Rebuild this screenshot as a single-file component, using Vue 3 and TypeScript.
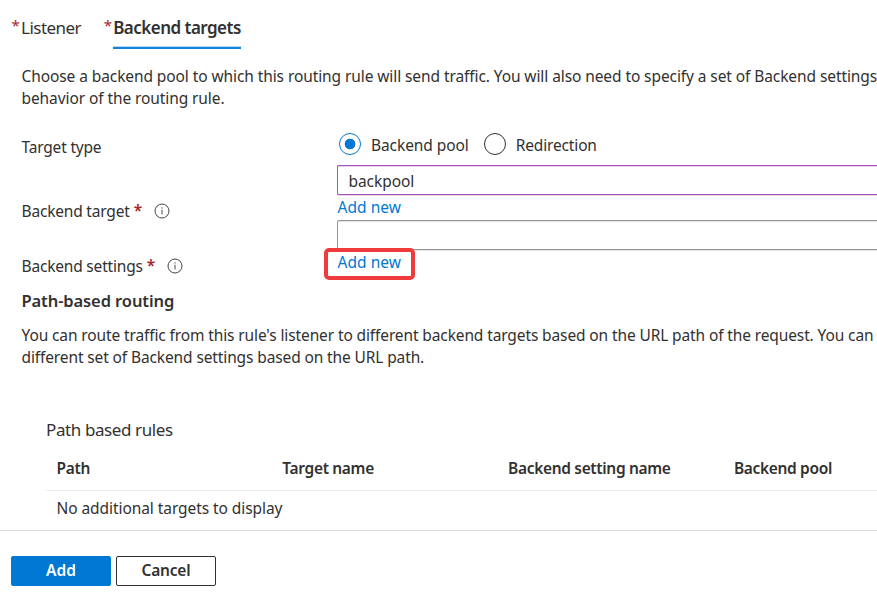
<script setup lang="ts">
import { ref } from 'vue'

interface Option {
  id: string
  label: string
}

const options: Option[] = [
  { id: 'pool', label: 'Backend pool' },
  { id: 'redirect', label: 'Redirection' },
]
const selected = ref('pool')
const backendTarget = ref('backpool')
const backendSettings = ref('')
const columns: string[] = ['Path', 'Target name', 'Backend setting name', 'Backend pool']
</script>

<template>
  <div class="panel">
    <nav class="tabs">
      <a class="tab"><i class="star">*</i><span class="tab-text">Listener</span></a>
      <a class="tab active"><i class="star">*</i><span class="tab-text">Backend targets</span></a>
    </nav>
    <p class="intro">Choose a backend pool to which this routing rule will send traffic. You will also need to specify a set of Backend settings<br>behavior of the routing rule.</p>
    <div class="form">
      <div class="row type-row">
        <div class="label">Target type</div>
        <div class="radios">
          <label v-for="o in options" :key="o.id" class="radio" @click="selected = o.id">
            <span class="circle" :class="{ on: selected === o.id }"></span>
            <span class="radio-text">{{ o.label }}</span>
          </label>
        </div>
      </div>
      <div class="row">
        <div class="label">
          <span>Backend target</span><b class="req">*</b>
          <svg class="info" viewBox="0 0 16 16"><circle cx="8" cy="8" r="7" /><path d="M8 6.8v4.6M8 4.3v1.3" /></svg>
        </div>
        <div class="control">
          <div class="field focus">{{ backendTarget }}</div>
          <a class="link">Add new</a>
        </div>
      </div>
      <div class="row">
        <div class="label">
          <span>Backend settings</span><b class="req">*</b>
          <svg class="info" viewBox="0 0 16 16"><circle cx="8" cy="8" r="7" /><path d="M8 6.8v4.6M8 4.3v1.3" /></svg>
        </div>
        <div class="control">
          <div class="field">{{ backendSettings }}</div>
          <a class="link marked">Add new</a>
        </div>
      </div>
    </div>
    <h3 class="heading">Path-based routing</h3>
    <p class="about">You can route traffic from this rule's listener to different backend targets based on the URL path of the request. You can<br>different set of Backend settings based on the URL path.</p>
    <section class="rules">
      <h4 class="rules-title">Path based rules</h4>
      <div class="head">
        <div v-for="c in columns" :key="c">{{ c }}</div>
      </div>
      <div class="empty">No additional targets to display</div>
    </section>
    <footer class="footer">
      <button class="btn primary">Add</button>
      <button class="btn">Cancel</button>
    </footer>
  </div>
</template>

<style>
body {
  background: #fff;
}
</style>

<style scoped>
.panel {
  width: 100%;
  height: 602px;
  box-sizing: border-box;
  overflow: hidden;
  display: flex;
  flex-direction: column;
  color: #323130;
  background: #fff;
  font-family: 'Noto Sans', 'Open Sans', sans-serif;
  font-size: 15.5px;
  line-height: 22px;
  white-space: nowrap;
}
.tabs {
  display: flex;
  gap: 22.5px;
  padding: 16px 0 0 11.5px;
  height: 33px;
}
.tab {
  display: flex;
  font-size: 17px;
  line-height: 24px;
  letter-spacing: -0.52px;
}
.tab-text {
  height: 31px;
}
.star {
  width: 9.5px;
  font-style: normal;
  font-size: 15px;
  line-height: 18px;
  color: #a4262c;
}
.active .tab-text {
  font-weight: 600;
  border-bottom: 2px solid #1481da;
  box-shadow: inset 0 -1px #b8dbf5;
}
.intro {
  margin: 16px 0 0 21.5px;
  letter-spacing: -0.09px;
}
.form {
  margin: 24px 0 0 21px;
}
.row {
  display: grid;
  grid-template-columns: 316px 1fr;
  height: 55px;
}
.type-row {
  height: 32px;
}
.label {
  display: flex;
  padding: 37px 0 0 0.5px;
  line-height: 18px;
  letter-spacing: -0.19px;
}
.type-row .label {
  padding-top: 3px;
  line-height: 22px;
}
.req {
  margin-left: 4px;
  font-weight: 600;
  line-height: 16px;
  color: #a4262c;
}
.info {
  width: 16px;
  height: 16px;
  margin: 1px 0 0 11.6px;
  fill: none;
  stroke: #444;
  stroke-width: 1;
}
.radios {
  display: flex;
  gap: 15px;
  padding-left: 2px;
  letter-spacing: -0.08px;
}
.radio {
  display: flex;
  gap: 10px;
}
.radio + .radio {
  letter-spacing: -0.15px;
}
.circle {
  width: 22px;
  height: 22px;
  box-sizing: border-box;
  border: 1px solid #323130;
  border-radius: 50%;
}
.circle.on {
  border-color: #0078d4;
  background: radial-gradient(circle, #0078d4 5px, transparent 5.7px);
}
.radio-text {
  padding-top: 1px;
}
.field {
  height: 30px;
  box-sizing: border-box;
  border: 1px solid #979593;
  border-right: 0;
  border-radius: 2px 0 0 2px;
  padding: 4px 10.5px;
  letter-spacing: -0.06px;
  box-shadow: inset 0 1px #e4e4e3, 0 1px #e4e4e3;
}
.field.focus {
  border-color: #a352bb;
  box-shadow: inset 0 1px #e8d2ee, 0 1px #e8d2ee;
}
.link {
  display: block;
  margin-top: 1px;
  padding-left: 0.5px;
  color: #0078d4;
  letter-spacing: 0.04px;
}
.marked {
  position: relative;
}
.marked::after {
  content: '';
  position: absolute;
  left: -13.5px;
  top: -3px;
  width: 91px;
  height: 32px;
  box-sizing: border-box;
  border: 4px solid #f03a3c;
  border-radius: 5px;
}
.heading {
  margin: 15px 0 0 21.5px;
  font-size: 16.5px;
  font-weight: 600;
  letter-spacing: -0.1px;
}
.about {
  margin: 12px 0 0 21.5px;
  letter-spacing: -0.12px;
}
.rules {
  margin: 50px 0 0 46px;
}
.rules-title {
  margin: 0;
  font-size: 17px;
  font-weight: 400;
  line-height: 24px;
  letter-spacing: -0.4px;
}
.head {
  display: grid;
  grid-template-columns: repeat(4, 225.8px);
  height: 33px;
  padding: 15px 0 0 10.5px;
  border-bottom: 1px solid #edebe9;
  font-weight: 600;
  letter-spacing: -0.33px;
}
.empty {
  height: 33px;
  padding: 6px 0 0 10.5px;
  letter-spacing: -0.07px;
}
.footer {
  display: flex;
  gap: 5px;
  padding: 25px 11px 0;
  border-top: 1px solid #dcdcdc;
}
.btn {
  width: 100px;
  height: 30px;
  padding: 0 0 2px;
  border: 1px solid #323130;
  border-radius: 2px;
  background: #fff;
  color: #323130;
  font: inherit;
  font-weight: 600;
  letter-spacing: -0.2px;
}
.btn.primary {
  border-color: #0078d4;
  background: #0078d4;
  color: #fff;
  letter-spacing: 0;
}
</style>
